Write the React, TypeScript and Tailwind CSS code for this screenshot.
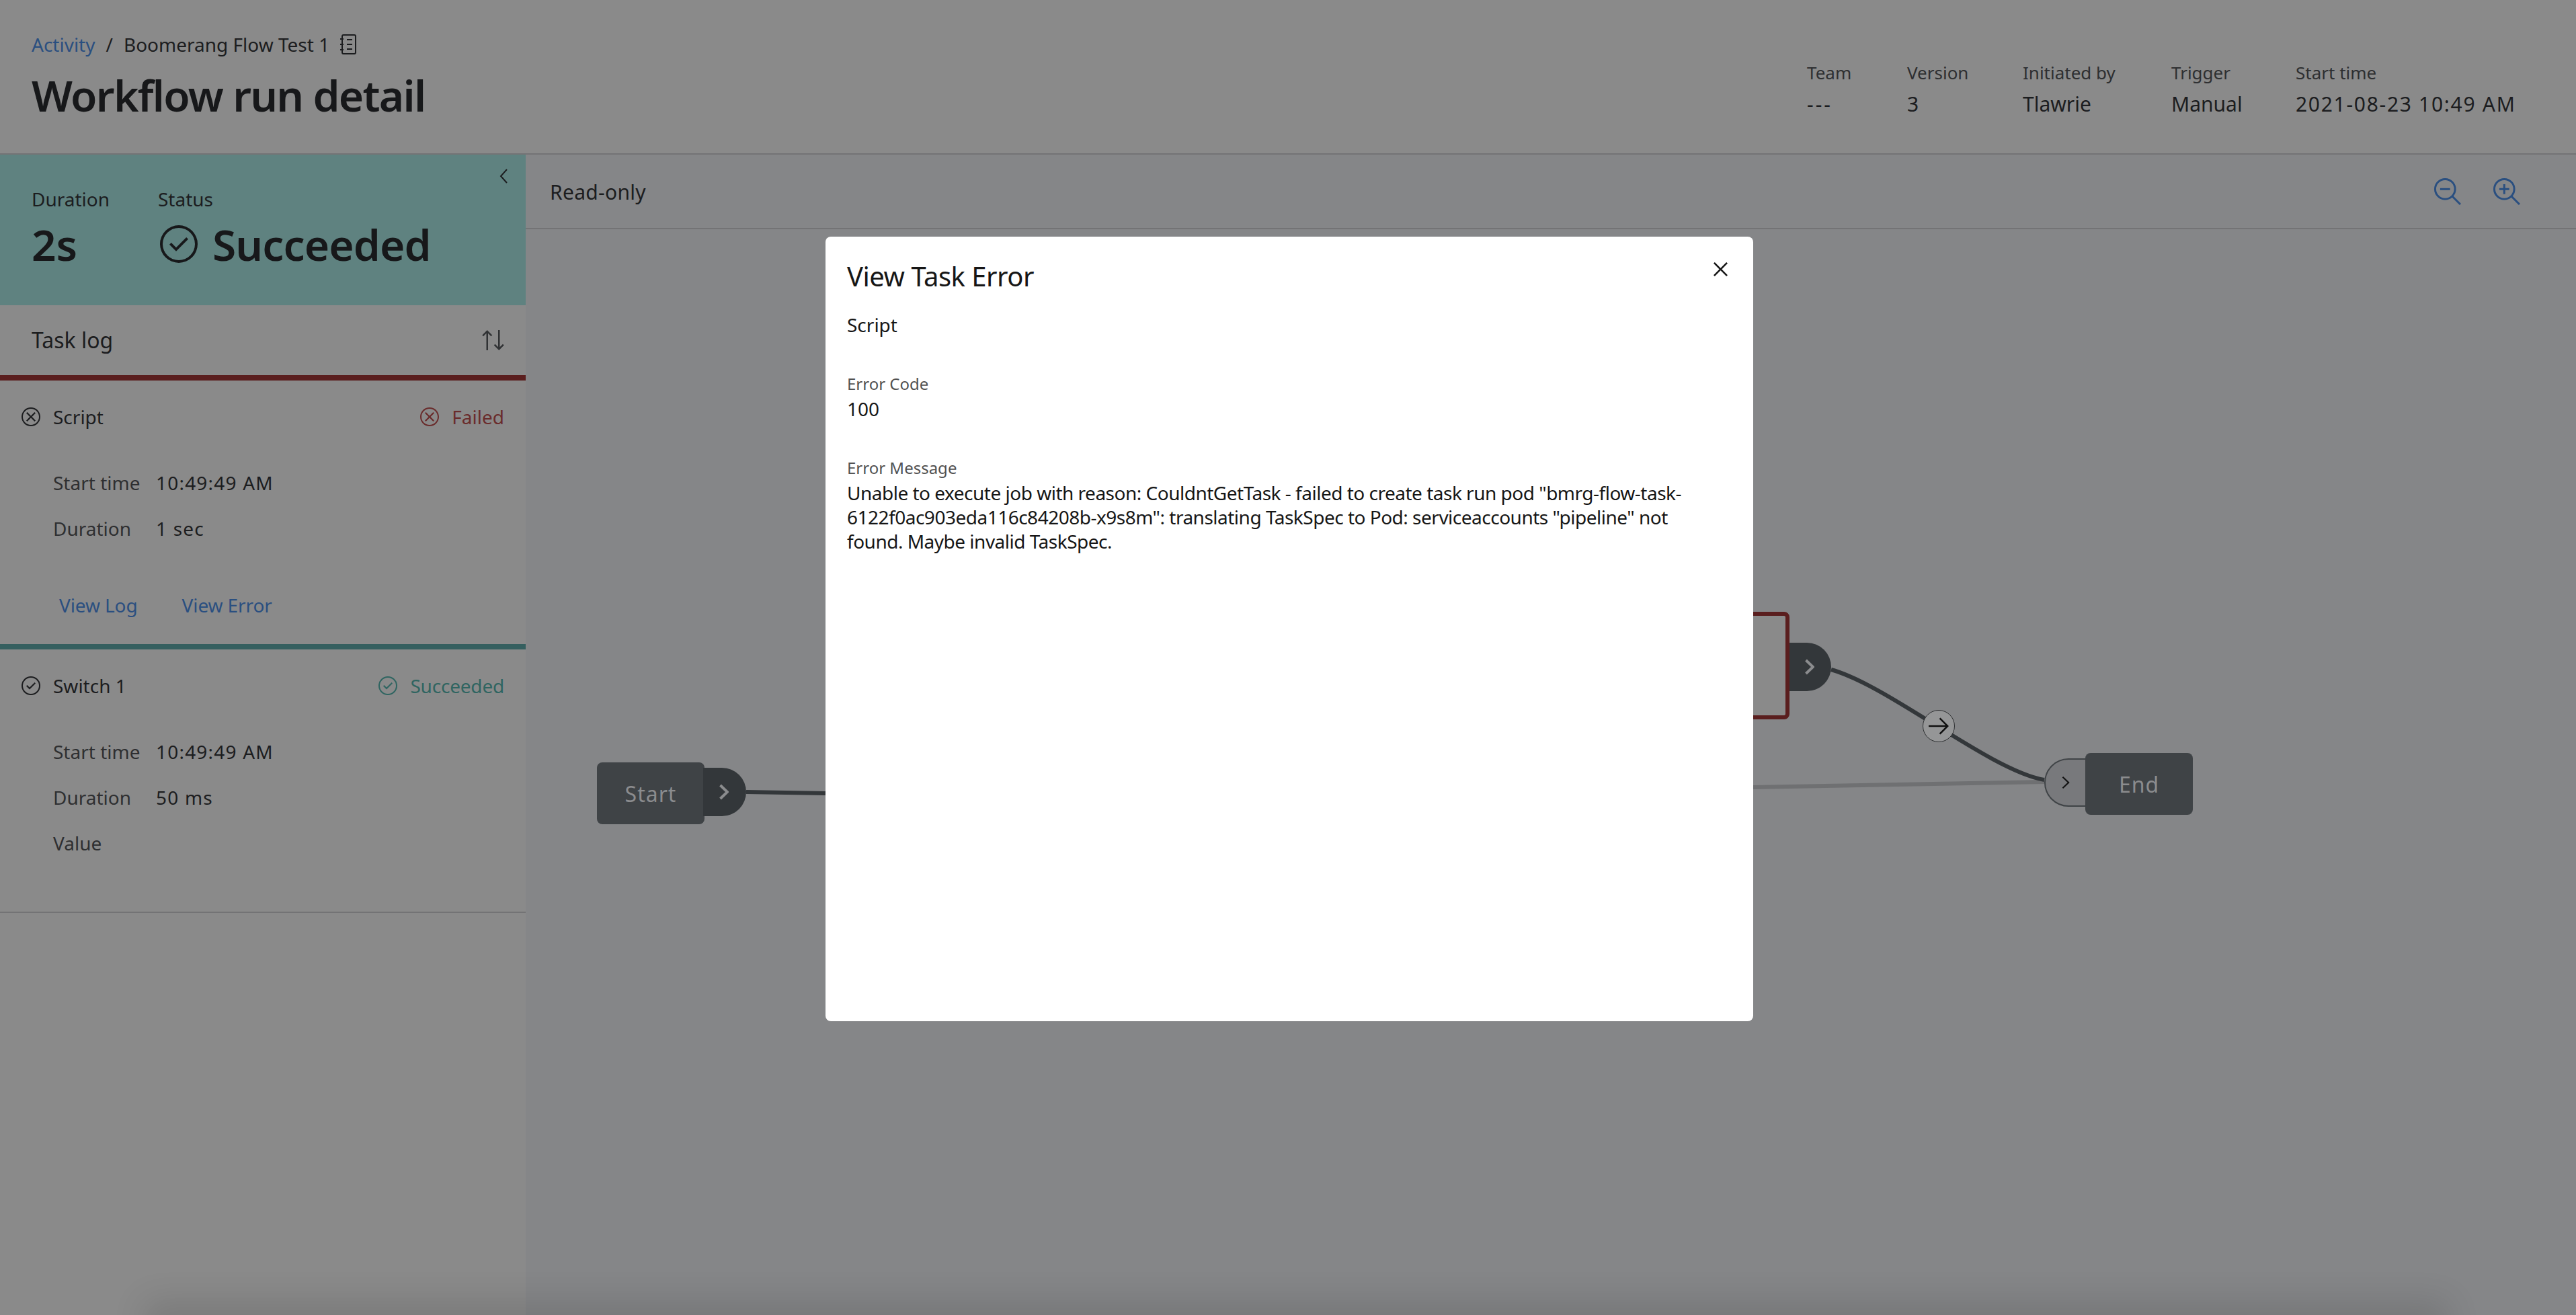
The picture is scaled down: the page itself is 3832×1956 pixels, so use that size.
const font = "font-['Noto_Sans','Open_Sans',sans-serif]";

function CheckCircle({ className }: { className?: string }) {
  return (
    <svg viewBox="2 2 28 28" fill="currentColor" className={className}>
      <path d="M14 21.414 9 16.413 10.413 15 14 18.586 21.585 11 23 12.415 14 21.414z" />
      <path d="M16 2a14 14 0 1 0 14 14A14 14 0 0 0 16 2Zm0 26a12 12 0 1 1 12-12 12 12 0 0 1-12 12Z" />
    </svg>
  );
}

function CloseCircle({ className }: { className?: string }) {
  return (
    <svg viewBox="2 2 28 28" fill="currentColor" className={className}>
      <path d="M16 2C8.2 2 2 8.2 2 16s6.2 14 14 14 14-6.2 14-14S23.8 2 16 2zm0 26C9.4 28 4 22.6 4 16S9.4 4 16 4s12 5.4 12 12-5.4 12-12 12z" />
      <path d="M21.4 23 16 17.6 10.6 23 9 21.4 14.4 16 9 10.6 10.6 9 16 14.4 21.4 9 23 10.6 17.6 16 23 21.4z" />
    </svg>
  );
}

const lens =
  "M21.4479,20A10.856,10.856,0,0,0,24,13,11,11,0,1,0,13,24a10.856,10.856,0,0,0,7-2.5521L27.5859,29,29,27.5859ZM13,22a9,9,0,1,1,9-9A9.01,9.01,0,0,1,13,22Z";

function Detail({ label, value }: { label: string; value?: string }) {
  return (
    <div className="flex h-[68px] items-center pl-[79px] text-[28px]">
      <span className="w-[153px] text-[#2e2f31]">{label}</span>
      {value && <span className="tracking-[1.2px] text-[#1c1d1f]">{value}</span>}
    </div>
  );
}

function TaskItem({
  name,
  failed,
  height,
  children,
}: {
  name: string;
  failed?: boolean;
  height: string;
  children: React.ReactNode;
}) {
  const statusIcon = "h-[28px] w-[28px]";
  return (
    <section className={`${height} border-t-[8px] ${failed ? "border-[#5a1e1e]" : "border-[#355f5f]"}`}>
      <div className="mt-[36px] flex h-[36px] items-center justify-between pl-[32px] pr-[32px] text-[28px]">
        <div className="flex items-center gap-[19px] text-[#1c1d1f]">
          {failed ? <CloseCircle className={statusIcon} /> : <CheckCircle className={statusIcon} />}
          <span>{name}</span>
        </div>
        {failed ? (
          <div className="flex items-center gap-[19px] text-[#6a2c2c]">
            <CloseCircle className={statusIcon} />
            <span>Failed</span>
          </div>
        ) : (
          <div className="flex items-center gap-[19px] text-[#2f6561]">
            <CheckCircle className={statusIcon} />
            <span className="tracking-[-0.2px]">Succeeded</span>
          </div>
        )}
      </div>
      <div className="mt-[46px]">{children}</div>
    </section>
  );
}

function Meta({
  label,
  value,
  width,
  valueClass,
}: {
  label: string;
  value: string;
  width: string;
  valueClass?: string;
}) {
  return (
    <div className={width}>
      <div className="h-[36px] text-[26px] leading-[36px] text-[#2e2f31]">{label}</div>
      <div className={`mt-[11px] h-[36px] text-[30px] leading-[36px] text-[#1c1d1f] ${valueClass ?? ""}`}>{value}</div>
    </div>
  );
}

function Chevron({ className, thin }: { className?: string; thin?: boolean }) {
  return (
    <svg viewBox="0 0 14 24" fill="none" stroke="currentColor" strokeWidth={thin ? 2.5 : 4} className={className}>
      <path d="M1.5 2 12 12 1.5 22" />
    </svg>
  );
}

function Canvas() {
  return (
    <div className="relative flex-1 bg-[#858688]">
      <svg className="absolute inset-0 h-full w-full" fill="none">
        <path d="M328 837 L446 839" stroke="#33373a" strokeWidth="6" />
        <path d="M1826 830 L2259 822" stroke="#6f7072" strokeWidth="6" />
        <path d="M1942 655 C2028 679 2178 805 2259 819" stroke="#33373a" strokeWidth="6" />
      </svg>

      {/* Start */}
      <div className="absolute left-[106px] top-[793px] flex h-[92px] w-[160px] items-center justify-center rounded-lg bg-[#3f4346] pt-[2px] text-[32px] tracking-[1px] text-[#8b8c8e]">
        Start
      </div>
      <div className="absolute left-[264px] top-[801px] flex h-[72px] w-[64px] items-center justify-center rounded-r-[36px] bg-[#33373a] pr-[2px] text-[#8b8c8e]">
        <Chevron className="h-[24px] w-[14px]" />
      </div>

      {/* Failed task behind the modal */}
      <div className="absolute left-[1500px] top-[569px] h-[160px] w-[380px] rounded-lg border-[6px] border-[#5a1e1e] bg-[#8a8a8a]" />
      <div className="absolute left-[1880px] top-[615px] flex h-[72px] w-[62px] items-center justify-center rounded-r-[36px] bg-[#33373a] pr-[2px] text-[#8b8c8e]">
        <Chevron className="h-[24px] w-[14px]" />
      </div>

      {/* Link */}
      <div className="absolute left-[2078px] top-[715px] flex h-[48px] w-[48px] items-center justify-center rounded-full border border-[#2d2f31] bg-[#959697] text-[#111]">
        <svg viewBox="4 6 24 20" fill="currentColor" className="h-[26px] w-[30px]">
          <path d="M18 6 16.57 7.393 24.15 15 4 15 4 17 24.15 17 16.57 24.573 18 26 28 16 18 6z" />
        </svg>
      </div>

      {/* End */}
      <div className="absolute left-[2259px] top-[787px] flex h-[72px] w-[64px] items-center justify-center rounded-l-[36px] border-2 border-[#3f4346] bg-[#78797c] text-[#111]">
        <Chevron thin className="h-[20px] w-[12px]" />
      </div>
      <div className="absolute left-[2320px] top-[779px] flex h-[92px] w-[160px] items-center justify-center rounded-lg bg-[#3f4346] pt-[2px] text-[32px] tracking-[1px] text-[#8b8c8e]">
        End
      </div>
    </div>
  );
}

export default function App() {
  return (
    <div className={`relative flex h-screen w-screen flex-col overflow-hidden bg-[#8a8a8a] ${font}`}>
      <header className="flex h-[230px] shrink-0 justify-between border-b-2 border-[#737375] pl-[47px]">
        <div>
          <div className="mt-[48px] flex h-[36px] items-center text-[28px] text-[#1c1d1f]">
            <span className="text-[#2a4f80]">Activity</span>
            <span className="mx-[16px]">/</span>
            <span>Boomerang Flow Test 1</span>
            <svg viewBox="0 0 24 30" fill="none" stroke="currentColor" strokeWidth="2" className="ml-[16px] h-[30px] w-[24px]">
              <rect x="3" y="1" width="20" height="28" rx="2" />
              <path d="M0 7h5M0 15h5M0 23h5M10 8h8M10 15h8M10 22h8" />
            </svg>
          </div>
          <h1 className="mt-[22px] text-[64px] font-semibold leading-[72px] tracking-[-1.7px] text-[#17181a]">Workflow run detail</h1>
        </div>
        <div className="flex pr-[91px] pt-[90px]">
          <Meta label="Team" value="---" width="w-[149px]" valueClass="tracking-[3px]" />
          <Meta label="Version" value="3" width="w-[172px]" />
          <Meta label="Initiated by" value="Tlawrie" width="w-[221px]" />
          <Meta label="Trigger" value="Manual" width="w-[185px]" />
          <Meta label="Start time" value="2021-08-23 10:49 AM" width="w-[326px]" valueClass="tracking-[1.7px] whitespace-nowrap" />
        </div>
      </header>

      <main className="flex min-h-0 flex-1">
        <aside className="w-[782px] shrink-0">
          <div className="relative h-[224px] bg-[#5f8280] pl-[47px] pt-[48px]">
            <svg viewBox="0 0 12 24" fill="none" stroke="#1c1d1f" strokeWidth="2" className="absolute left-[743px] top-[20px] h-[24px] w-[12px]">
              <path d="M11 2 2 12l9 10" />
            </svg>
            <div className="flex">
              <div className="w-[188px]">
                <div className="text-[28px] leading-[36px] text-[#1c1d1f]">Duration</div>
                <div className="mt-[14px] text-[64px] font-semibold leading-[72px] text-[#17181a]">2s</div>
              </div>
              <div>
                <div className="text-[28px] leading-[36px] text-[#1c1d1f]">Status</div>
                <div className="mt-[14px] flex h-[72px] items-center gap-[22px] pl-[3px] text-[64px] font-semibold leading-[72px] tracking-[-0.9px] text-[#17181a]">
                  <CheckCircle className="-mt-[2px] h-[56px] w-[56px]" />
                  <span>Succeeded</span>
                </div>
              </div>
            </div>
          </div>
          <div className="flex h-[104px] items-center justify-between pl-[47px] pr-[32px] text-[32px] text-[#1c1d1f]">
            <span>Task log</span>
            <svg viewBox="3 4 26 24" fill="#303234" className="h-[30px] w-[33px]">
              <path d="M27.6 20.6 24 24.2 24 4 22 4 22 24.2 18.4 20.6 17 22 23 28 29 22zM9 4 3 10 4.4 11.4 8 7.8 8 28 10 28 10 7.8 13.6 11.4 15 10z" />
            </svg>
          </div>
          <TaskItem name="Script" failed height="h-[400px]">
            <Detail label="Start time" value="10:49:49 AM" />
            <Detail label="Duration" value="1 sec" />
            <div className="mt-[60px] flex h-[40px] items-center gap-[66px] pl-[88px] text-[28px] tracking-[-0.1px] text-[#2a4f80]">
              <span>View Log</span>
              <span>View Error</span>
            </div>
          </TaskItem>
          <TaskItem name="Switch 1" height="h-[398px]">
            <Detail label="Start time" value="10:49:49 AM" />
            <Detail label="Duration" value="50 ms" />
            <Detail label="Value" />
          </TaskItem>
          <div className="border-t-2 border-[#737375]" />
        </aside>

        <div className="flex min-w-0 flex-1 flex-col">
          <div className="flex h-[111px] shrink-0 items-center justify-between border-b-2 border-[#737375] bg-[#858688] pl-[36px] pr-[83px] text-[30px] tracking-[0.3px] text-[#1c1d1f]">
            <span className="pt-[2px]">Read-only</span>
            <div className="flex gap-[48px] text-[#2a4f80]">
              <svg viewBox="2 2 27 27" fill="currentColor" className="h-[40px] w-[40px]">
                <path d="M8 12H18V14H8z" />
                <path d={lens} />
              </svg>
              <svg viewBox="2 2 27 27" fill="currentColor" className="h-[40px] w-[40px]">
                <path d="M18 12 14 12 14 8 12 8 12 12 8 12 8 14 12 14 12 18 14 18 14 14 18 14z" />
                <path d={lens} />
              </svg>
            </div>
          </div>
          <Canvas />
        </div>
      </main>

      {/* shadow along the bottom edge of the page */}
      <div className="absolute bottom-[-20px] left-[235px] right-[210px] h-[20px] shadow-[0_0_50px_20px_rgba(0,0,0,0.12)]" />

      {/* Modal */}
      <div className="absolute left-[1228px] top-[352px] h-[1167px] w-[1380px] rounded-lg bg-white px-[32px] text-[#161616]">
        <svg viewBox="8 8 16 16" fill="currentColor" className="absolute right-[38px] top-[38px] h-[21px] w-[21px]">
          <path d="M24 9.4 22.6 8 16 14.6 9.4 8 8 9.4 14.6 16 8 22.6 9.4 24 16 17.4 22.6 24 24 22.6 17.4 16 24 9.4z" />
        </svg>
        <h2 className="mt-[34px] h-[50px] text-[40px] leading-[50px] tracking-[-0.5px]">View Task Error</h2>
        <p className="mt-[29px] h-[36px] text-[28px] leading-[36px]">Script</p>
        <p className="mt-[54px] h-[32px] text-[24px] leading-[32px] text-[#525252]">Error Code</p>
        <p className="mt-[3px] h-[36px] text-[28px] leading-[36px]">100</p>
        <p className="mt-[54px] h-[32px] text-[24px] leading-[32px] text-[#525252]">Error Message</p>
        <p className="mt-[3px] w-[1290px] text-[28px] leading-[36px] tracking-[-0.5px]">
          Unable to execute job with reason: CouldntGetTask - failed to create task run pod "bmrg-flow-task-6122f0ac903eda116c84208b-x9s8m": translating TaskSpec to Pod: serviceaccounts "pipeline" not found. Maybe invalid TaskSpec.
        </p>
      </div>
    </div>
  );
}
